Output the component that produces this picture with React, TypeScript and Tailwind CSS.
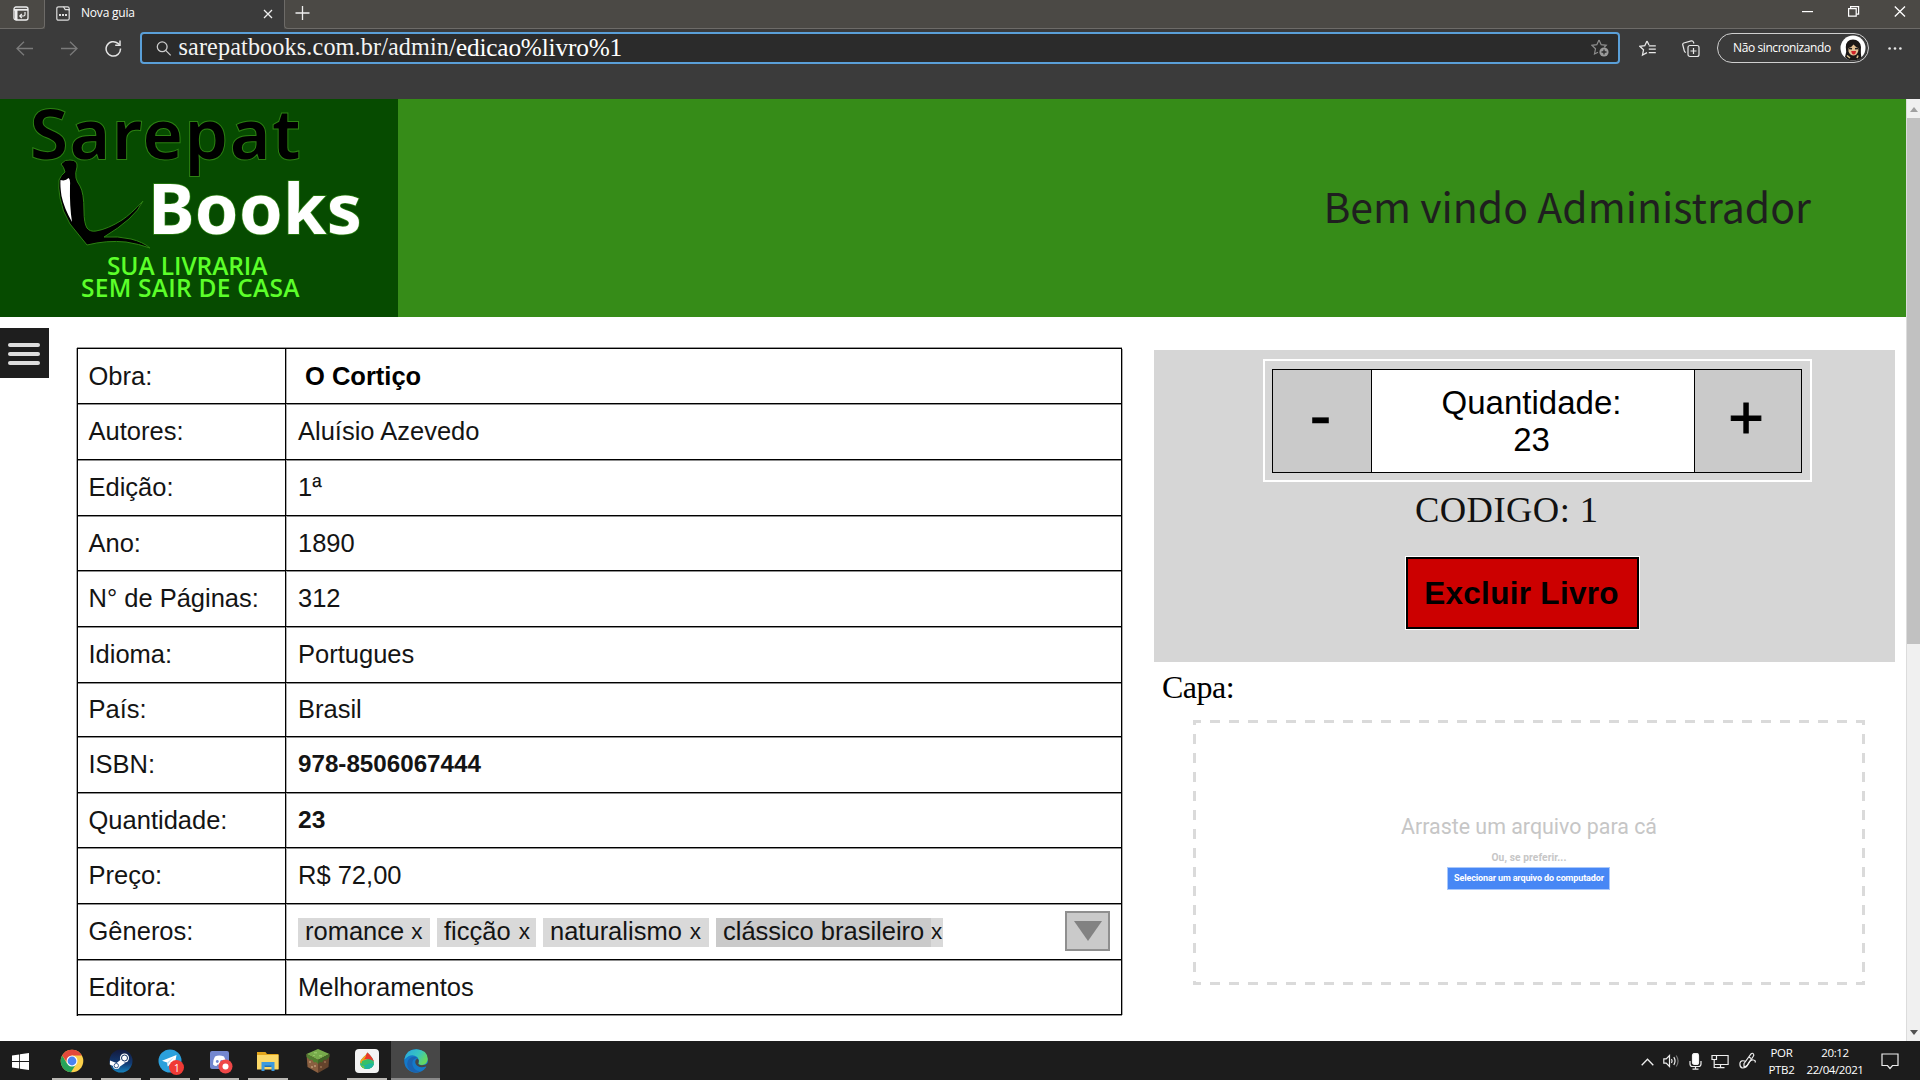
import React from "react";

const serif = "font-['Liberation_Serif',serif]";
const ui = "font-['Open_Sans',sans-serif]";

type RowData = { label: string; height: string; value: React.ReactNode };

function Tag({ text, width, gap = "gap-[8px]" }: { text: string; width: string; gap?: string }) {
  return (
    <span className={`flex h-[29px] shrink-0 items-center bg-[#d9d9d9] pl-[7px] ${gap} ${width}`}>
      <span>{text}</span>
      <span className="text-[22.500px]">x</span>
    </span>
  );
}

const rows: RowData[] = [
  { label: "Obra:", height: "h-[55px]", value: <b className="pl-[7px] text-black">O Cortiço</b> },
  { label: "Autores:", height: "h-[56px]", value: "Aluísio Azevedo" },
  { label: "Edição:", height: "h-[56px]", value: "1ª" },
  { label: "Ano:", height: "h-[55px]", value: "1890" },
  { label: "N° de Páginas:", height: "h-[56px]", value: "312" },
  { label: "Idioma:", height: "h-[56px]", value: "Portugues" },
  { label: "País:", height: "h-[54px]", value: "Brasil" },
  { label: "ISBN:", height: "h-[56px]", value: <b className="pb-[2px] text-[24.200px]">978-8506067444</b> },
  { label: "Quantidade:", height: "h-[55px]", value: <b className="text-[24.600px]">23</b> },
  { label: "Preço:", height: "h-[56px]", value: "R$ 72,00" },
  {
    label: "Gêneros:",
    height: "h-[56px]",
    value: (
      <div className="flex w-[812px] items-center gap-[7px]">
        <Tag text="romance" width="w-[132px]" gap="gap-[7px]" />
        <Tag text="ficção" width="w-[99px]" />
        <Tag text="naturalismo" width="w-[166px]" />
        <span className="flex h-[29px] w-[227px] shrink-0 items-center bg-[#d9d9d9]">
          <span className="flex h-full w-[215px] items-center bg-[#cacaca] pl-[7px]">clássico brasileiro</span>
          <span className="text-[22.500px]">x</span>
        </span>
        <span className="mb-[2px] ml-auto flex h-10 w-[45px] items-center justify-center border-2 border-[#8f8f8f] bg-[#cacaca]">
          <svg width="28" height="20" viewBox="0 0 28 20">
            <path d="M0 0h28L14 20z" fill="#828282" />
          </svg>
        </span>
      </div>
    ),
  },
  { label: "Editora:", height: "h-[55px]", value: "Melhoramentos" },
];

function BookTable() {
  return (
    <div className="mt-[31px] ml-[28px] h-[668px] w-[1045px] shrink-0 border-t border-l border-black text-[25.500px] leading-none text-[#141414] shadow-[0_-1px_0_#999,-1px_0_0_#aaa]">
      {rows.map((r) => (
        <div key={r.label} className={`flex border-r border-b border-black shadow-[0_1px_0_#8f8f8f,1px_0_0_#aaa] ${r.height}`}>
          <div className="flex w-[208px] shrink-0 items-center border-r border-black pt-px pl-[10.500px] whitespace-nowrap shadow-[1px_0_0_#aaa]">
            {r.label}
          </div>
          <div className="flex items-center pt-px pl-[12px] whitespace-nowrap">{r.value}</div>
        </div>
      ))}
    </div>
  );
}

function TitleBar() {
  return (
    <div className="flex h-[29px] shrink-0 bg-[#4b4945] text-[#eee]">
      <div className="flex w-[45px] items-start rounded-br border-r border-b border-[#6d6b68] pt-[6px] pl-[13px]">
        <svg width="16" height="15" viewBox="0 0 16 15" fill="none" stroke="#eee" strokeWidth="1.3">
          <rect x="1" y="1" width="14" height="13" rx="2" />
          <path d="M1 3.8h14" strokeWidth="1.8" />
          <path d="M3.2 4v10" strokeWidth="2.6" />
          <path d="M12 6v2.5q0 1.5-1.5 1.5H7M8.8 8L6.8 10l2 2" strokeWidth="1.2" />
        </svg>
      </div>
      <div className="flex w-[239px] bg-[#3b3b3b] pt-[6px] pl-[11px]">
        <svg width="14" height="15" viewBox="0 0 14 15" fill="none" stroke="#ddd" strokeWidth="1.200">
          <path d="M2.600.8h4.900l1.700 2.800h4v8.800q0 1.800-1.800 1.800H2.600Q.8 14.200.8 12.400V2.600Q.8.8 2.600.8z" />
          <path d="M7.500.8h3.900q1.800 0 1.800 1.800v2" />
          <path d="M3 9h2M6 9h2M9 9h2" strokeWidth="1.800" />
        </svg>
        <span className={`${ui} ml-[11px] w-[172px] text-[12px] leading-[14px] tracking-[-0.200px] text-white`}>Nova guia</span>
        <svg className="mt-[3px] ml-[10px]" width="10" height="10" viewBox="0 0 10 10" stroke="#eee" strokeWidth="1.3">
          <path d="M1 1l8 8M9 1l-8 8" />
        </svg>
      </div>
      <div className="flex grow rounded-bl border-b border-l border-[#6d6b68] pl-[10px]">
        <svg className="mt-[6px]" width="15" height="15" viewBox="0 0 15 15" stroke="#eee" strokeWidth="1.3">
          <path d="M7.500 0v14M.5 7h14" />
        </svg>
        <svg className="mt-[11px] ml-auto" width="11" height="2" viewBox="0 0 11 2">
          <rect width="11" height="1.200" fill="#fff" />
        </svg>
        <svg className="mt-[6px] ml-[35px]" width="12" height="11" viewBox="0 0 12 11" fill="none" stroke="#fff" strokeWidth="1.200">
          <path d="M.6 2.600h7.600v7.600H.6z" />
          <path d="M2.600 2.600V.6h8v7.600H8.400" />
        </svg>
        <svg className="mt-[6px] mr-[14px] ml-[34px]" width="12" height="11" viewBox="0 0 12 11" stroke="#fff" strokeWidth="1.300">
          <path d="M.8.500l10.200 10M11 .5L.8 10.500" />
        </svg>
      </div>
    </div>
  );
}

function Avatar() {
  return (
    <svg width="26" height="26" viewBox="0 0 26 26">
      <circle cx="13" cy="13" r="12.500" fill="#fff" />
      <path d="M5 22Q7 17 5.800 12Q6 4.500 13 4.500T21 12Q20.500 19 21.500 22.500Q18 25.500 13 25.500Q8 25.500 5 22z" fill="#1c1817" />
      <path d="M8.500 13q3-.5 5-3.500 2 2.500 4.800 3.500v3q-1.500 4.500-4.900 4.500T8.500 16.500z" fill="#e3bf93" />
      <path d="M8.800 13.400l3.200.3M15 13.800l3-.4" stroke="#222" strokeWidth="1.500" />
      <path d="M11.200 16h4.800q-.3 3.600-2.300 3.600T11.200 16z" fill="#d2232a" />
      <path d="M7 20.500l3 2.500M18 20.500l-1 2.500" stroke="#d9c08f" strokeWidth="1.600" />
    </svg>
  );
}

function AddressBar() {
  return (
    <div className="flex h-[70px] shrink-0 items-start bg-[#3b3b3b] pt-[3px]">
      <svg className="mt-[9px] ml-[16px]" width="17" height="15" viewBox="0 0 17 15" fill="none" stroke="#7a7a7a" strokeWidth="1.300">
        <path d="M17 7.500H1M8 .7L1 7.500l7 6.800" />
      </svg>
      <svg className="mt-[9px] ml-[28px]" width="17" height="15" viewBox="0 0 17 15" fill="none" stroke="#7a7a7a" strokeWidth="1.300">
        <path d="M0 7.500h16M9 .7l7 6.800-7 6.800" />
      </svg>
      <svg className="mt-[8px] ml-[27px]" width="17" height="17" viewBox="0 0 17 17" fill="none" stroke="#e4e4e4" strokeWidth="1.500">
        <path d="M15.500 8.500A7.200 7.200 0 1 1 13 3.400l1.500 1.400" />
        <path d="M15 .5v4.700h-4.800" />
      </svg>
      <div className="ml-[18px] flex h-[32px] w-[1480px] items-center rounded-[4px] border-2 border-[#5a9fd8] bg-[#2b2b2b]">
        <svg className="ml-[14px]" width="16" height="15" viewBox="0 0 16 15" fill="none" stroke="#ccc" strokeWidth="1.300">
          <circle cx="6.200" cy="5.800" r="4.900" />
          <path d="M9.700 9.400l5 5" />
        </svg>
        <span className={`${serif} ml-[6.500px] flex items-baseline text-[24.200px] leading-none whitespace-nowrap text-[#f4f4f4]`}>
          <span className="relative -top-px tracking-[0.130px]">sarepatbooks.com.br/admin</span>
          <span className="text-[25.300px] tracking-[-0.180px] text-white">/edicao%livro%1</span>
        </span>
        <svg className="mr-[9px] ml-auto" width="18" height="18" viewBox="0 0 18 18" fill="none" stroke="#8d8d8d" strokeWidth="1.200">
          <path d="M8 1l2.200 4.700 5 .6-2 1.900M8 1L5.800 5.700.8 6.300l3.700 3.500-1 5.200L7 13.200" />
          <circle cx="13" cy="13" r="4.600" fill="#999" stroke="none" />
          <path d="M13 10.500v5M10.500 13h5" stroke="#2b2b2b" strokeWidth="1.300" />
        </svg>
      </div>
      <svg className="mt-[8px] ml-[19px]" width="18" height="17" viewBox="0 0 18 17" fill="none" stroke="#e8e8e8" strokeWidth="1.300">
        <path d="M8 1l2 4M8 1L5.800 5.700.8 6.300l3.700 3.500-1 5.200L8 12.700" />
        <path d="M9.800 5.800h7M9.800 9.200h7M9.800 12.600h7" />
      </svg>
      <svg className="mt-[8px] ml-[25px]" width="18" height="18" viewBox="0 0 18 18" fill="none" stroke="#e8e8e8" strokeWidth="1.200">
        <rect x="6" y="5.500" width="11" height="11" rx="2" />
        <path d="M11.500 8v6M8.500 11h6M3.800 12.500Q2.600 12 2.300 10.800L.8 5q-.4-1.500 1-2L9.300.9q1.600-.3 2.200 1.200l.4 1.400" />
      </svg>
      <div className="mt-[1px] ml-[17px] flex h-[30px] w-[152px] items-center justify-between rounded-full border-[1.500px] border-[#cfcfcf] pr-[2px] pl-[15px]">
        <span className={`${ui} text-[12px] leading-none tracking-[-0.400px] whitespace-nowrap text-white`}>Não sincronizando</span>
        <Avatar />
      </div>
      <svg className="mt-[15px] ml-[19px]" width="14" height="3" viewBox="0 0 14 3" fill="#e8e8e8">
        <circle cx="1.600" cy="1.500" r="1.300" />
        <circle cx="7" cy="1.500" r="1.300" />
        <circle cx="12.400" cy="1.500" r="1.300" />
      </svg>
    </div>
  );
}

function Logo() {
  return (
    <div className="relative h-[218px] w-[398px] shrink-0 bg-[#064b00] leading-none whitespace-nowrap">
      <span className="absolute top-[1px] left-[30px] font-['Noto_Sans',sans-serif] text-[69px] leading-[64px] font-semibold tracking-[1.900px] text-black [-webkit-text-stroke:2px_#2c8012] [paint-order:stroke_fill]">
        Sarepat
      </span>
      <svg className="absolute top-[59px] left-[56px]" width="94" height="92" viewBox="0 0 94 92">
        <path
          d="M5 6Q9 1 14 2q8 0 7 7-2 6-1 11 1 4 4 8 4 7 4 25 0 12 3 17 3 4 9 3 12-2 26-11 9-6 21-19-4 9-14 18-10 9-25 18 14-1 27 2 12 3 19 9-11-4-24-6-19-2-39 3L14 66Q6 53 4 40 2 29 3 22q2-5 6-8-1-5-4-8z"
          fill="#000"
          stroke="#2c8012"
          strokeWidth="1"
        />
        <path d="M4.500 22q5 1.500 8-2 2 1 1.500 8-.5 20 2 36Q8 50 5.500 38 4 28 4.500 22z" fill="#fff" />
      </svg>
      <span className="absolute top-[76px] left-[148px] font-['Noto_Sans',sans-serif] text-[70px] leading-[64px] font-bold tracking-[0.300px] text-white [-webkit-text-stroke:1.500px_#2c8012] [paint-order:stroke_fill]">
        Books
      </span>
      <span className="absolute top-[156px] left-[107px] font-['Open_Sans',sans-serif] text-[24.500px] leading-[22px] font-semibold tracking-[-0.100px] text-[#5cff2a]">
        SUA LIVRARIA
      </span>
      <span className="absolute top-[178px] left-[81px] font-['Open_Sans',sans-serif] text-[24.500px] leading-[22px] font-semibold tracking-[0.250px] text-[#5cff2a]">
        SEM SAIR DE CASA
      </span>
    </div>
  );
}

function ControlPanel() {
  return (
    <div className="flex h-[312px] w-[741px] flex-col bg-[#d6d6d6]">
      <div className="mt-[9px] ml-[109px] h-[123px] w-[549px] border-2 border-white p-[7px] pt-[8px]">
        <div className="flex h-[104px] w-[530px] border border-black bg-white text-black">
          <div className="flex w-[99px] items-center justify-center border-r border-black bg-[#cacaca] pr-[3px] pb-[12px] text-[66px] leading-none [-webkit-text-stroke:0.500px_black]">
            -
          </div>
          <div className="flex grow flex-col items-center justify-center pr-[3px] pb-px text-center text-[33px] leading-[37px]">
            <span>Quantidade:</span>
            <span>23</span>
          </div>
          <div className="flex w-[107px] items-center justify-center border-l border-black bg-[#cacaca] pr-[4px] pb-[7px] text-[61px] leading-none [-webkit-text-stroke:1px_black]">
            +
          </div>
        </div>
      </div>
      <div className={`${serif} mt-[8px] ml-[261px] text-[36.600px] leading-[40px] tracking-[0.400px] text-[#111]`}>CODIGO: 1</div>
      <div className="mt-[26px] ml-[251px] h-[74px] w-[235px] border border-white">
        <div className="flex h-full w-full items-center justify-center border-2 border-black bg-[#cc0000] pt-px pr-[2px] text-[31.500px] leading-none font-bold tracking-[0.300px] whitespace-nowrap text-black">
          Excluir Livro
        </div>
      </div>
    </div>
  );
}

const hDash =
  "h-[3px] w-full shrink-0 bg-[repeating-linear-gradient(to_right,#dadada_0px,#dadada_8px,transparent_8px,transparent_17px,#dadada_17px,#dadada_18.990px)]";
const vDash =
  "w-[3px] bg-[repeating-linear-gradient(to_bottom,#dadada_0px,#dadada_2px,transparent_2px,transparent_11px,#dadada_11px,#dadada_19px)]";

function DropZone() {
  return (
    <div className="mt-[13px] ml-[39px] flex h-[265px] w-[672px] flex-col">
      <div className={hDash} />
      <div className="flex min-h-0 grow justify-between">
        <div className={vDash} />
        <div className="flex flex-col items-center font-['Roboto',sans-serif] whitespace-nowrap text-[#c6c6c6]">
          <span className="mt-[91px] text-[21.400px] leading-[26px]">Arraste um arquivo para cá</span>
          <span className="mt-[12px] text-[10.200px] leading-[12px] font-bold tracking-[0.100px]">Ou, se preferir...</span>
          <span className="mt-[3px] flex h-[23px] w-[163px] items-center justify-center border border-[#a9c8fb] bg-[#4787f5] text-[9px] leading-none font-bold tracking-[-0.120px] text-white">
            Selecionar um arquivo do computador
          </span>
        </div>
        <div className={vDash} />
      </div>
      <div className={hDash} />
    </div>
  );
}

function Scrollbar() {
  return (
    <div className="flex w-[14px] shrink-0 flex-col items-center border-l border-[#dcdcdc] bg-[#f0f0f0]">
      <svg className="mt-[8px]" width="8" height="5" viewBox="0 0 8 5">
        <path d="M0 5l4-5 4 5z" fill="#a0a0a0" />
      </svg>
      <div className="mt-[6px] h-[526px] w-full bg-[#c1c1c1]" />
      <svg className="mt-auto mb-[6px]" width="8" height="5" viewBox="0 0 8 5">
        <path d="M0 0h8L4 5z" fill="#505050" />
      </svg>
    </div>
  );
}

function TaskItem({ children, open = false, active = false }: { children: React.ReactNode; open?: boolean; active?: boolean }) {
  return (
    <div className={`flex h-full w-[49.100px] flex-col items-center justify-between pt-[8px] ${active ? "bg-[#474747]" : ""}`}>
      {children}
      <div className={`h-[2px] ${active ? "w-full bg-[#8a8a8a]" : open ? "w-[40px] bg-[#b9b7b3]" : "w-0"}`} />
    </div>
  );
}

function Taskbar() {
  return (
    <div className="flex h-[39px] shrink-0 items-stretch bg-[#1c1c1c] text-white">
      <div className="w-[47.500px] pt-[12px] pl-[12px]">
        <svg width="17" height="17" viewBox="0 0 17 17" fill="#fff">
          <path d="M0 2.400l7.200-1V8H0zM8 1.300L17 0v8H8zM0 8.900h7.200v6.600l-7.200-1zM8 8.900h9V17l-9-1.300z" />
        </svg>
      </div>
      <TaskItem open>
        <svg width="24" height="24" viewBox="0 0 24 24">
          <circle cx="12" cy="12" r="11.300" fill="#fbd04a" />
          <path d="M2.200 6.400A11.300 11.300 0 0 0 11 23.300L16.500 14.500 12 12 7 14.500z" fill="#27a35a" />
          <path d="M2.200 6.400A11.300 11.300 0 0 1 21.800 6.500H12L7.500 14z" fill="#e2493b" />
          <circle cx="12" cy="12" r="5.500" fill="#fff" />
          <circle cx="12" cy="12" r="4.400" fill="#4a83f0" />
        </svg>
      </TaskItem>
      <TaskItem open>
        <svg width="24" height="24" viewBox="0 0 24 24">
          <defs>
            <linearGradient id="steam" x1="0" y1="0" x2="0" y2="1">
              <stop offset="0" stopColor="#13193c" />
              <stop offset=".6" stopColor="#123a72" />
              <stop offset="1" stopColor="#1583be" />
            </linearGradient>
          </defs>
          <circle cx="12" cy="12" r="11.500" fill="url(#steam)" />
          <path d="M1 11.500L7.500 14l4.200-3.200L16 14l-5 3.500q-1 3-4 2.500T4 17L.8 15.500z" fill="#fff" />
          <circle cx="15.500" cy="9" r="4.500" fill="#fff" />
          <circle cx="15.500" cy="9" r="3" fill="#fff" stroke="#12305f" strokeWidth="1" />
          <circle cx="7.300" cy="16.600" r="2.200" fill="none" stroke="#123a72" strokeWidth=".8" />
        </svg>
      </TaskItem>
      <TaskItem open>
        <div className="relative">
          <svg width="24" height="24" viewBox="0 0 24 24">
            <circle cx="12" cy="12" r="11.500" fill="#2ba0dc" />
            <path d="M4 11.800L18.500 6l-2.300 12.500-4.200-3-2.200 2-.8-4z" fill="#fff" />
            <path d="M9 13.500l7-5.500-5.600 6.300-.6 3.200z" fill="#b9d9ee" />
          </svg>
          <span className="absolute top-[11px] left-[11px] flex h-[15px] w-[15px] items-center justify-center rounded-full bg-[#f03a35] font-['Open_Sans',sans-serif] text-[10px] leading-none text-white">
            1
          </span>
        </div>
      </TaskItem>
      <TaskItem open>
        <svg width="26" height="25" viewBox="0 0 26 25" className="ml-[3px]">
          <path d="M4 2h15q2 0 2 2v19l-4-3H4q-2 0-2-2V4q0-2 2-2z" fill="#7387cf" />
          <path d="M7 7.500q4-2 9 0 2 3 2 8-2 1.500-3.500 1.500l-1-1.600h-4l-1 1.600Q6.500 17 5 15.500q0-5 2-8z" fill="#fff" />
          <circle cx="9.300" cy="12.500" r="1.400" fill="#7387cf" />
          <circle cx="13.700" cy="12.500" r="1.400" fill="#7387cf" />
          <circle cx="17.500" cy="17.500" r="7" fill="#ef4747" />
          <circle cx="17.500" cy="17.500" r="3" fill="#fff" />
        </svg>
      </TaskItem>
      <TaskItem open>
        <svg width="24" height="24" viewBox="0 0 24 24">
          <path d="M1 3h8.500l1.500 2H22.500v15H1z" fill="#e3a51b" />
          <path d="M1 6h21.500v14.500H1z" fill="#fbd867" />
          <path d="M5.500 13h13v9h-3v-4.500h-7V22h-3z" fill="#3c9ade" />
          <path d="M8.500 16.500h7v1.500h-7z" fill="#1e6fb4" />
        </svg>
      </TaskItem>
      <TaskItem>
        <svg width="24" height="24" viewBox="0 0 24 24">
          <path d="M12 0l11.500 5-11.500 6L.5 5z" fill="#77ab4b" />
          <path d="M.5 5L12 11v13L1.500 18z" fill="#8a5f40" />
          <path d="M23.500 5L12 11v13l10.500-6z" fill="#64432c" />
          <path d="M.5 5L12 11v4l-2-2-2 .5-2-3-2 .5-3.400-3z" fill="#4f7f2f" />
          <path d="M23.500 5L12 11v4l2-2 2 .5 2-3 2 .5 3.400-3z" fill="#3f6626" />
          <path d="M3 12h2v2H3zM8 16h2v2H8zM5 17h2v2H5z" fill="#b08a68" />
          <path d="M14 17h2v2h-2zM18 12h2v2h-2z" fill="#8c6546" />
          <path d="M8 3h3v1.500H8zM13 6h3v1.500h-3zM7 6h2v1H7z" fill="#93c565" />
        </svg>
      </TaskItem>
      <TaskItem open>
        <svg width="24" height="24" viewBox="0 0 24 24">
          <defs>
            <clipPath id="drop">
              <path d="M12.500 3.500Q11 6 8.500 8 5 11 5 14a7 6 0 0 0 14 0Q19 9.500 12.500 3.500z" />
            </clipPath>
          </defs>
          <rect width="24" height="24" rx="4" fill="#f3f3f3" />
          <g clipPath="url(#drop)">
            <rect width="24" height="24" fill="#2fbf7b" />
            <path d="M3 12L13 3v7q-5 1-6 5z" fill="#f9a11b" />
            <path d="M11 3h9v11q-2-4-8-4-3 0-4 1 4-3 3-8z" fill="#e8382c" />
            <path d="M7 12q6-3 12 3v6H5z" fill="#35c06a" />
            <path d="M4 14q2 3 7 2 4-3 8-1v7H4z" fill="#1fb5a0" />
            <path d="M4 13q1 4 5 4l1 4H4z" fill="#74c93a" />
          </g>
        </svg>
      </TaskItem>
      <TaskItem active>
        <svg width="24" height="24" viewBox="0 0 24 24">
          <defs>
            <linearGradient id="edgeTop" x1="0" y1="0" x2="1" y2=".5">
              <stop offset="0" stopColor="#2aa5e0" />
              <stop offset=".6" stopColor="#37c5c0" />
              <stop offset="1" stopColor="#65d860" />
            </linearGradient>
          </defs>
          <circle cx="12" cy="12" r="11.800" fill="#1479c9" />
          <path d="M.4 10.500Q2 .3 12.500.2 23.500 1 23.800 10q-.2 5.500-5.800 6-5 0-3.300-3 .8-2.500-1.500-5Q7 3.500.4 10.500z" fill="url(#edgeTop)" />
          <path d="M13.500 9Q7.500 9.500 8.500 16q2 6.500 8 6-5.500 3-11-1Q1 15 5 10q4.500-4 8.500-1z" fill="#1b62b0" />
          <path d="M13.500 9.500Q10.500 11 11.500 14.500q3 5.500 10.500 3 .8-.3.500.4l1.500 1V14q-2 2.300-6 2.300-5-.3-3.300-3.300.6-2-1.200-3.500z" fill="#474747" />
        </svg>
      </TaskItem>
      <div className="ml-auto flex items-start">
        <svg className="mt-[17px]" width="13" height="8" viewBox="0 0 13 8" fill="none" stroke="#eee" strokeWidth="1.300">
          <path d="M.7 7.200l5.800-6 5.800 6" />
        </svg>
        <svg className="mt-[13px] ml-[9px]" width="17" height="14" viewBox="0 0 17 14" fill="none" stroke="#eee" strokeWidth="1.200">
          <path d="M.8 4.800h2.400L6.500 1.500v11L3.200 9.200H.8z" />
          <path d="M8.500 5q1.200 2 0 4M10.800 3.200q2.500 3.800 0 7.600" />
          <path d="M13.200 1.500q3.700 5.500 0 11" stroke="#777" />
        </svg>
        <svg className="mt-[12px] ml-[9px]" width="13" height="17" viewBox="0 0 13 17" fill="none" stroke="#eee" strokeWidth="1.200">
          <rect x="3.500" y=".5" width="6" height="11" rx="2" fill="#fff" />
          <path d="M1 8v3q0 2.500 2.500 2.500h6q2.500 0 2.500-2.500V8M6.500 13.500V16M3.500 16.200h6" />
        </svg>
        <svg className="mt-[12px] ml-[9px]" width="18" height="16" viewBox="0 0 18 16" fill="none" stroke="#eee" strokeWidth="1.200">
          <path d="M5.500 2.500h11.600v9H3.500M9.500 11.500v3M5.500 14.700h8" />
          <path d="M1 2.500h4.500v4H1zM3.200 6.500v8h2.500" />
        </svg>
        <svg className="mt-[11px] ml-[10px]" width="18" height="18" viewBox="0 0 18 18" fill="none" stroke="#eee" strokeWidth="1.200">
          <path d="M5 11.500L12 2q1.500-1.500 2.500 0 .8 1-.3 2.500L8 13.500q-1.500 1.500-3 1.500z" />
          <path d="M7 9.500Q2 7.500 1 11q-.5 4.500 2.500 5 4 0 6-4.500T14.500 8q2.500.5 1.500 2.500M10 5l2 1.500" />
        </svg>
        <div className={`${ui} mt-[3px] ml-[11px] w-[27px] text-center text-[11.500px] leading-[17px] tracking-[-0.300px]`}>
          <div>POR</div>
          <div>PTB2</div>
        </div>
        <div className={`${ui} mt-[3px] ml-[9px] w-[62px] text-center text-[11.500px] leading-[17px] tracking-[-0.400px]`}>
          <div>20:12</div>
          <div>22/04/2021</div>
        </div>
        <svg className="mt-[12px] mr-[21px] ml-[15px]" width="18" height="17" viewBox="0 0 18 17" fill="none" stroke="#eee" strokeWidth="1.200">
          <path d="M1 1h16v11.500h-5.500L9 15.500l-2.500-3H1z" />
        </svg>
      </div>
    </div>
  );
}

export default function App() {
  return (
    <div className="flex h-[1080px] w-[1920px] flex-col overflow-hidden bg-white font-['Liberation_Sans',sans-serif]">
      <TitleBar />
      <AddressBar />
      <div className="flex h-[942px] shrink-0">
        <main className="flex w-[1906px] shrink-0 flex-col">
          <header className="flex h-[218px] shrink-0 bg-[#368c18]">
            <Logo />
            <h1 className="mt-[75px] mr-[95px] ml-auto font-['Noto_Sans_CJK_SC',sans-serif] text-[41px] leading-[62px] font-normal whitespace-nowrap text-[#1f1f1f]">
              Bem vindo Administrador
            </h1>
          </header>
          <div className="flex">
            <button className="mt-[11px] flex h-[50px] w-[49px] shrink-0 flex-col items-center justify-center gap-[5px] bg-[#1e1e1e] pt-[2px] pr-px">
              <span className="h-[4px] w-[32px] rounded-full bg-[#dedede]" />
              <span className="h-[4px] w-[32px] rounded-full bg-[#dedede]" />
              <span className="h-[4px] w-[32px] rounded-full bg-[#dedede]" />
            </button>
            <BookTable />
            <div className="mt-[33px] ml-[32px] flex flex-col">
              <ControlPanel />
              <div className={`${serif} mt-[5px] ml-[8px] text-[32px] leading-[40px] tracking-[-0.500px] text-black`}>Capa:</div>
              <DropZone />
            </div>
          </div>
        </main>
        <Scrollbar />
      </div>
      <Taskbar />
    </div>
  );
}
